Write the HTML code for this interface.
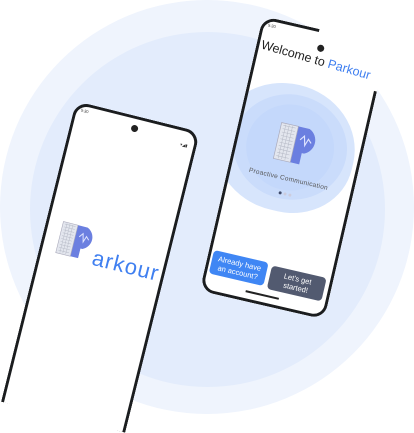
<!DOCTYPE html>
<html><head><style>
body{margin:0;width:414px;height:414px;overflow:hidden;background:#fff;position:relative;font-family:"Liberation Sans",sans-serif}
.c1{position:absolute;left:0;top:0;width:414px;height:414px;border-radius:50%;background:#eff4fd}
.c2{position:absolute;left:30px;top:32px;width:355px;height:355px;border-radius:50%;background:#e3ecfc}
.ph{position:absolute;transform-origin:0 0;background:#fff;box-sizing:border-box;overflow:hidden}
.cam{position:absolute;width:7px;height:7px;border-radius:50%;background:#222}
.logo{position:absolute}
.btn{position:absolute;border-radius:4px;color:#fff;font-size:7.5px;text-align:center;line-height:9px;display:flex;align-items:center;justify-content:center}
</style></head><body>
<div class="c1"></div><div class="c2"></div>

<!-- left phone -->
<div class="ph" style="left:76px;top:101px;width:128px;height:310px;transform:rotate(14deg);border:3px solid #1b1d1f;border-bottom:none;border-radius:14px 14px 0 0">
  <div style="position:absolute;left:4px;top:2px;font-size:4px;color:#333">5:30</div>
  <div style="position:absolute;right:6px;top:11px;font-size:4px;color:#333">▾◢▮</div>
  <div class="cam" style="left:57px;top:6px"></div>
  <svg class="logo" style="left:13px;top:116px" width="40" height="34" viewBox="0 0 40 34">
    <path d="M16 1 H26 A12 12 0 0 1 26 23 H24 V33 H16 Z" fill="#6b7fe0"/>
    <rect x="1" y="1" width="15" height="32" fill="#e3e6ee" stroke="#aab" stroke-width="0.6"/>
    <path d="M3 3h11M3 6h11M3 9h11M3 12h11M3 15h11M3 18h11M3 21h11M3 24h11M3 27h11M3 30h11M5 2v30M8 2v30M11 2v30" stroke="#b8bcc8" stroke-width="0.5"/>
    <path d="M20 12 l3 -4 l2 8 l2 -6 l3 3" stroke="#dfe4ff" fill="none" stroke-width="1"/>
  </svg>
  <div style="position:absolute;left:51px;top:132px;font-size:22px;color:#3f7ff0;letter-spacing:1px">arkour</div>
</div>

<!-- right phone -->
<div class="ph" style="left:263px;top:16px;width:128px;height:282px;transform:rotate(13deg);border-radius:14px">
 <div style="position:absolute;left:3px;top:3px;width:122px;height:276px">
  <div style="position:absolute;left:4px;top:2px;font-size:4px;color:#333">5:30</div>
  <div class="cam" style="left:57px;top:12px"></div>
  <div style="position:absolute;left:2px;top:18px;font-size:12.5px;color:#222;white-space:nowrap;transform:rotate(3deg);transform-origin:0 50%">Welcome to <span style="color:#3f7ff0">Parkour</span></div>
  <div style="position:absolute;left:-22px;top:56px;width:140px;height:128px;border-radius:50% 50% 45% 50%;background:#d7e5fc"></div>
  <div style="position:absolute;left:-4px;top:66px;width:114px;height:105px;border-radius:50%;background:#cadcfb"></div>
  <div style="position:absolute;left:9px;top:76px;width:88px;height:86px;border-radius:50%;background:#c4d8fb"></div>
  <svg class="logo" style="left:38px;top:94px" width="46" height="42" viewBox="0 0 40 34">
    <path d="M16 1 H26 A12 12 0 0 1 26 23 H24 V33 H16 Z" fill="#6b7fe0"/>
    <rect x="1" y="1" width="15" height="32" fill="#e3e6ee" stroke="#aab" stroke-width="0.6"/>
    <path d="M3 3h11M3 6h11M3 9h11M3 12h11M3 15h11M3 18h11M3 21h11M3 24h11M3 27h11M3 30h11M5 2v30M8 2v30M11 2v30" stroke="#b8bcc8" stroke-width="0.5"/>
    <path d="M20 12 l3 -4 l2 8 l2 -6 l3 3" stroke="#dfe4ff" fill="none" stroke-width="1"/>
  </svg>
  <div style="position:absolute;left:18px;top:147px;font-size:6.5px;color:#555;white-space:nowrap;letter-spacing:0.3px">Proactive Communication</div>
  <div style="position:absolute;left:52px;top:164px;width:3px;height:3px;border-radius:50%;background:#3f4a6a"></div>
  <div style="position:absolute;left:57px;top:164px;width:3px;height:3px;border-radius:50%;background:#ccd"></div>
  <div style="position:absolute;left:62px;top:164px;width:3px;height:3px;border-radius:50%;background:#ccd"></div>
  <div class="btn" style="left:2px;top:236px;width:56px;height:24px;background:#3f86f4">Already have<br>an account?</div>
  <div class="btn" style="left:62px;top:238px;width:56px;height:24px;background:#525a70">Let's get<br>started!</div>
  <div style="position:absolute;left:42px;top:268px;width:34px;height:1.5px;background:#222"></div>
 </div>
 <svg style="position:absolute;left:0;top:0" width="128" height="282"><path d="M58 1.5 H14 A12.5 12.5 0 0 0 1.5 14 V268 A12.5 12.5 0 0 0 14 280.5 H114 A12.5 12.5 0 0 0 126.5 268 V48" fill="none" stroke="#1b1d1f" stroke-width="3"/></svg>
</div>
</body></html>
